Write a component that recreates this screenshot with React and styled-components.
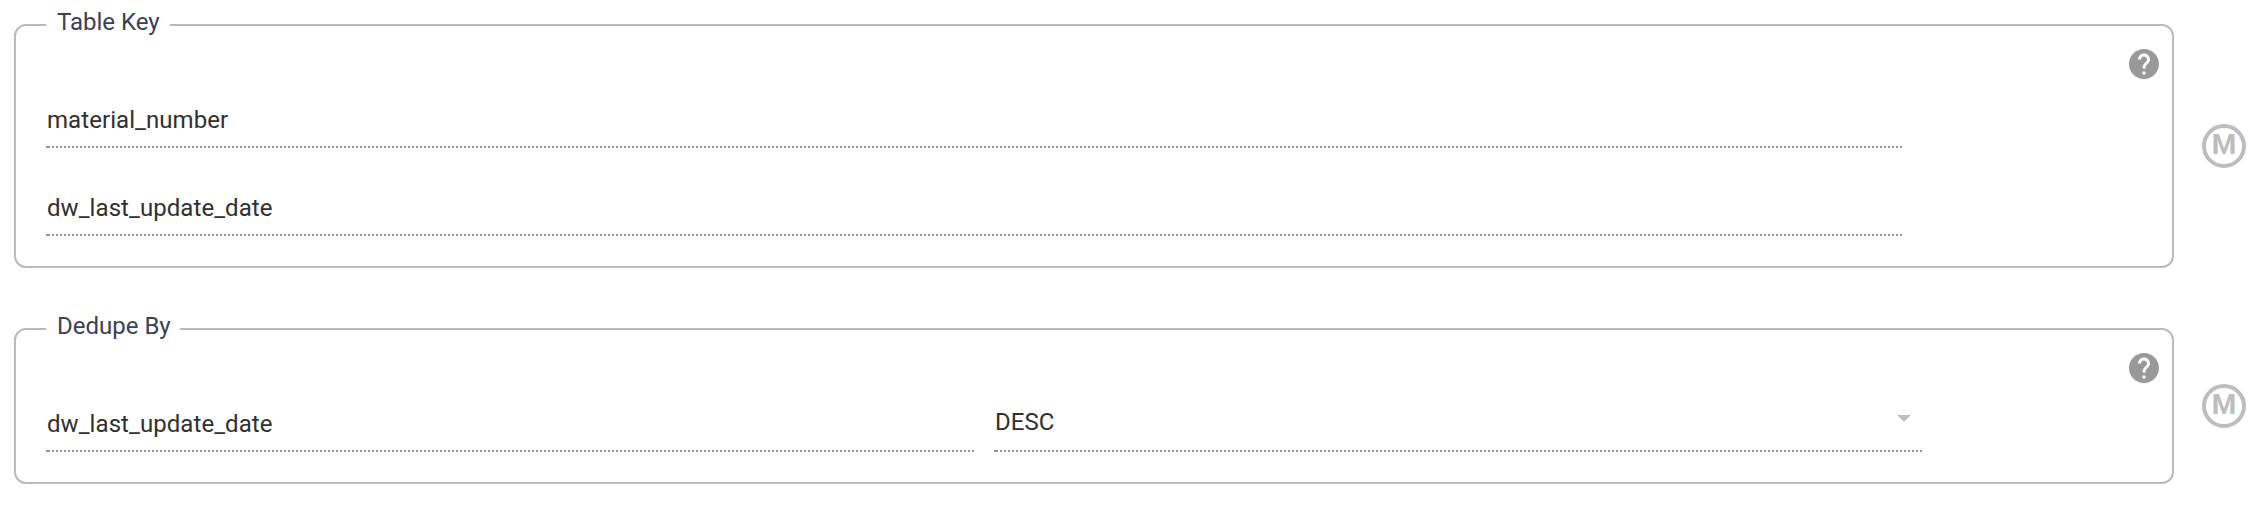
import React from "react";
import styled, { createGlobalStyle } from "styled-components";

const GlobalStyle = createGlobalStyle`
  *, *::before, *::after { box-sizing: border-box; }
  body {
    margin: 0;
    background: #fff;
    font-family: Roboto, "Liberation Sans", sans-serif;
    -webkit-font-smoothing: antialiased;
  }
`;

const Page = styled.main`
  display: flex;
  flex-direction: column;
  gap: 60px;
  padding: 24px 12px 22px 14px;
`;

const Section = styled.section`
  display: flex;
  align-items: center;
  gap: 28px;
`;

const Group = styled.div`
  position: relative;
  flex: none;
  display: flex;
  justify-content: space-between;
  align-items: flex-start;
  width: 2160px;
  height: ${(p) => p.$height}px;
  padding: 20px 10px 0 30px;
  border: 2px solid #bababa;
  border-radius: 12px;
`;

const GroupLabel = styled.div`
  position: absolute;
  top: -20px;
  left: 30px;
  width: ${(p) => p.$width}px;
  padding-left: 11px;
  background: #fff;
  color: #3b4157;
  font-size: 24px;
  line-height: 32px;
  white-space: nowrap;
`;

const Rows = styled.div`
  display: flex;
  flex-direction: column;
  padding-top: 14px;
`;

const Row = styled.div`
  display: flex;
  gap: 20px;
`;

const Field = styled.div`
  display: flex;
  align-items: flex-end;
  justify-content: space-between;
  width: ${(p) => p.$width}px;
  height: 88px;
  padding: 0 11px ${(p) => (p.$select ? 16 : 14)}px 1px;
  background: linear-gradient(#949494, #949494) 0 100% / 4px 2px no-repeat,
    repeating-linear-gradient(90deg, #949494 0 2px, transparent 2px 4px) 2px 100% / 100% 2px no-repeat;
  color: #303030;
  font-size: 24px;
  letter-spacing: 0.07px;
  line-height: 28px;
`;

const Arrow = styled.svg`
  width: 14px;
  height: 7px;
  margin-bottom: 14px;
  fill: #bdbdbd;
`;

const HelpIcon = styled.svg`
  width: 30px;
  height: 30px;
  margin: 3px 3px 0 0;
  fill: #999;
`;

const Badge = styled.div`
  display: flex;
  align-items: center;
  justify-content: center;
  width: 44px;
  height: 44px;
  padding-bottom: 2px;
  border: 4px solid #bdbdbd;
  border-radius: 50%;
  color: #bdbdbd;
  font-size: 28px;
  font-weight: 700;
  line-height: 34px;
`;

const Help = () => (
  <HelpIcon viewBox="2 2 20 20">
    <path d="M12 2C6.48 2 2 6.48 2 12s4.480 10 10 10 10-4.480 10-10S17.520 2 12 2zm1 17h-2v-2h2v2zm2.070-7.750l-.9.920C13.450 12.900 13 13.500 13 15h-2v-.5c0-1.100.45-2.100 1.170-2.830l1.240-1.260c.37-.36.59-.86.59-1.410 0-1.100-.9-2-2-2s-2 .9-2 2H8c0-2.210 1.790-4 4-4s4 1.790 4 4c0 .88-.36 1.680-.93 2.250z" />
  </HelpIcon>
);

function FieldGroup({ label, labelWidth, height, children }) {
  return (
    <Section>
      <Group $height={height}>
        <GroupLabel $width={labelWidth}>{label}</GroupLabel>
        <Rows>{children}</Rows>
        <Help />
      </Group>
      <Badge>M</Badge>
    </Section>
  );
}

export default function App() {
  return (
    <>
      <GlobalStyle />
      <Page>
        <FieldGroup label="Table Key" labelWidth={124} height={244}>
          <Row>
            <Field $width={1856}>material_number</Field>
          </Row>
          <Row>
            <Field $width={1856}>dw_last_update_date</Field>
          </Row>
        </FieldGroup>
        <FieldGroup label="Dedupe By" labelWidth={134} height={156}>
          <Row>
            <Field $width={928}>dw_last_update_date</Field>
            <Field $width={928} $select>
              DESC
              <Arrow viewBox="0 0 14 7">
                <path d="M0 0h14L7 7z" />
              </Arrow>
            </Field>
          </Row>
        </FieldGroup>
      </Page>
    </>
  );
}
